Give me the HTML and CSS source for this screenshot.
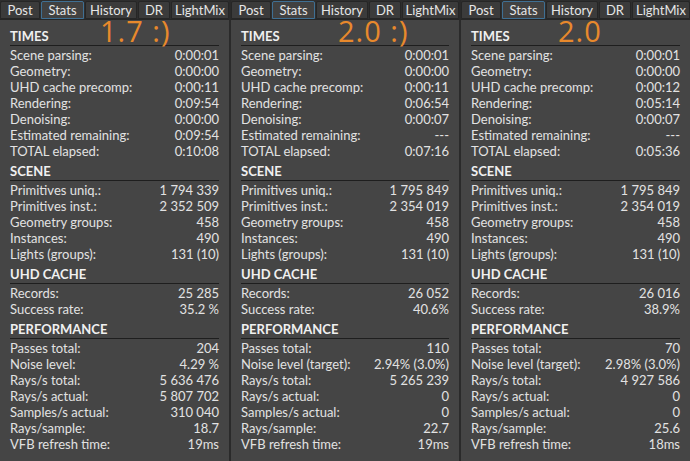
FILE: index.html
```html
<!DOCTYPE html>
<html>
<head>
<meta charset="utf-8">
<link rel="stylesheet" href="styles.css">
</head>
<body>
<div class="app">
  <section class="panel p1">
    <div class="tabs">
      <span class="tab w-post">Post</span>
      <span class="tab w-stats active">Stats</span>
      <span class="tab w-hist">History</span>
      <span class="tab w-dr">DR</span>
      <span class="tab w-lm">LightMix</span>
    </div>
    <div class="body">
      <div class="version v1">1.7 :)</div>
      <div class="hd first">TIMES</div>
      <div class="row"><span>Scene parsing:</span><span>0:00:01</span></div>
      <div class="row"><span>Geometry:</span><span>0:00:00</span></div>
      <div class="row"><span>UHD cache precomp:</span><span>0:00:11</span></div>
      <div class="row"><span>Rendering:</span><span>0:09:54</span></div>
      <div class="row"><span>Denoising:</span><span>0:00:00</span></div>
      <div class="row"><span>Estimated remaining:</span><span>0:09:54</span></div>
      <div class="row"><span>TOTAL elapsed:</span><span>0:10:08</span></div>
      <div class="hd">SCENE</div>
      <div class="row"><span>Primitives uniq.:</span><span>1 794 339</span></div>
      <div class="row"><span>Primitives inst.:</span><span>2 352 509</span></div>
      <div class="row"><span>Geometry groups:</span><span>458</span></div>
      <div class="row"><span>Instances:</span><span>490</span></div>
      <div class="row"><span>Lights (groups):</span><span>131 (10)</span></div>
      <div class="hd">UHD CACHE</div>
      <div class="row"><span>Records:</span><span>25 285</span></div>
      <div class="row"><span>Success rate:</span><span>35.2 %</span></div>
      <div class="hd">PERFORMANCE</div>
      <div class="row"><span>Passes total:</span><span>204</span></div>
      <div class="row"><span>Noise level:</span><span>4.29 %</span></div>
      <div class="row"><span>Rays/s total:</span><span>5 636 476</span></div>
      <div class="row"><span>Rays/s actual:</span><span>5 807 702</span></div>
      <div class="row"><span>Samples/s actual:</span><span>310 040</span></div>
      <div class="row"><span>Rays/sample:</span><span>18.7</span></div>
      <div class="row"><span>VFB refresh time:</span><span>19ms</span></div>
    </div>
  </section>
  <section class="panel p2">
    <div class="tabs">
      <span class="tab w-post">Post</span>
      <span class="tab w-stats active">Stats</span>
      <span class="tab w-hist">History</span>
      <span class="tab w-dr">DR</span>
      <span class="tab w-lm">LightMix</span>
    </div>
    <div class="body">
      <div class="version v2">2.0 :)</div>
      <div class="hd first">TIMES</div>
      <div class="row"><span>Scene parsing:</span><span>0:00:01</span></div>
      <div class="row"><span>Geometry:</span><span>0:00:00</span></div>
      <div class="row"><span>UHD cache precomp:</span><span>0:00:11</span></div>
      <div class="row"><span>Rendering:</span><span>0:06:54</span></div>
      <div class="row"><span>Denoising:</span><span>0:00:07</span></div>
      <div class="row"><span>Estimated remaining:</span><span>---</span></div>
      <div class="row"><span>TOTAL elapsed:</span><span>0:07:16</span></div>
      <div class="hd">SCENE</div>
      <div class="row"><span>Primitives uniq.:</span><span>1 795 849</span></div>
      <div class="row"><span>Primitives inst.:</span><span>2 354 019</span></div>
      <div class="row"><span>Geometry groups:</span><span>458</span></div>
      <div class="row"><span>Instances:</span><span>490</span></div>
      <div class="row"><span>Lights (groups):</span><span>131 (10)</span></div>
      <div class="hd">UHD CACHE</div>
      <div class="row"><span>Records:</span><span>26 052</span></div>
      <div class="row"><span>Success rate:</span><span>40.6%</span></div>
      <div class="hd">PERFORMANCE</div>
      <div class="row"><span>Passes total:</span><span>110</span></div>
      <div class="row"><span>Noise level (target):</span><span>2.94% (3.0%)</span></div>
      <div class="row"><span>Rays/s total:</span><span>5 265 239</span></div>
      <div class="row"><span>Rays/s actual:</span><span>0</span></div>
      <div class="row"><span>Samples/s actual:</span><span>0</span></div>
      <div class="row"><span>Rays/sample:</span><span>22.7</span></div>
      <div class="row"><span>VFB refresh time:</span><span>19ms</span></div>
    </div>
  </section>
  <section class="panel p3">
    <div class="tabs">
      <span class="tab w-post">Post</span>
      <span class="tab w-stats active">Stats</span>
      <span class="tab w-hist">History</span>
      <span class="tab w-dr">DR</span>
      <span class="tab w-lm">LightMix</span>
    </div>
    <div class="body">
      <div class="version v3">2.0</div>
      <div class="hd first">TIMES</div>
      <div class="row"><span>Scene parsing:</span><span>0:00:01</span></div>
      <div class="row"><span>Geometry:</span><span>0:00:00</span></div>
      <div class="row"><span>UHD cache precomp:</span><span>0:00:12</span></div>
      <div class="row"><span>Rendering:</span><span>0:05:14</span></div>
      <div class="row"><span>Denoising:</span><span>0:00:07</span></div>
      <div class="row"><span>Estimated remaining:</span><span>---</span></div>
      <div class="row"><span>TOTAL elapsed:</span><span>0:05:36</span></div>
      <div class="hd">SCENE</div>
      <div class="row"><span>Primitives uniq.:</span><span>1 795 849</span></div>
      <div class="row"><span>Primitives inst.:</span><span>2 354 019</span></div>
      <div class="row"><span>Geometry groups:</span><span>458</span></div>
      <div class="row"><span>Instances:</span><span>490</span></div>
      <div class="row"><span>Lights (groups):</span><span>131 (10)</span></div>
      <div class="hd">UHD CACHE</div>
      <div class="row"><span>Records:</span><span>26 016</span></div>
      <div class="row"><span>Success rate:</span><span>38.9%</span></div>
      <div class="hd">PERFORMANCE</div>
      <div class="row"><span>Passes total:</span><span>70</span></div>
      <div class="row"><span>Noise level (target):</span><span>2.98% (3.0%)</span></div>
      <div class="row"><span>Rays/s total:</span><span>4 927 586</span></div>
      <div class="row"><span>Rays/s actual:</span><span>0</span></div>
      <div class="row"><span>Samples/s actual:</span><span>0</span></div>
      <div class="row"><span>Rays/sample:</span><span>25.6</span></div>
      <div class="row"><span>VFB refresh time:</span><span>18ms</span></div>
    </div>
  </section>
</div>
</body>
</html>
```

FILE: styles.css
```css
* { box-sizing: border-box; }
html, body { margin: 0; padding: 0; }
body {
  width: 690px;
  height: 461px;
  overflow: hidden;
  background: #2a2a2a;
  font-family: "Lato", "Noto Sans", sans-serif;
  font-size: 13px;
  color: #e2e2e2;
}
.app {
  display: flex;
  gap: 2px;
  height: 461px;
}
.panel {
  position: relative;
  background: #454545;
  height: 461px;
  display: flex;
  flex-direction: column;
}
.p1 { width: 229px; }
.p2 { width: 228px; }
.p3 { width: 229px; }
.tabs {
  display: flex;
  height: 20px;
  background: #2e2e2e;
  border-bottom: 1px solid #262626;
  padding-top: 1px;
}
.tab {
  display: flex;
  align-items: center;
  justify-content: center;
  height: 18px;
  background: #3b3b3b;
  border: 1px solid #262626;
  border-radius: 2px 2px 0 0;
  margin-right: 1px;
  font-size: 13px;
  color: #e6e6e6;
}
.tab.active {
  border-color: #3f6f93;
  background: #414141;
}
.w-post { width: 40px; }
.w-stats { width: 43px; }
.w-hist { width: 52px; }
.w-dr { width: 32px; }
.w-lm { flex: 1; margin-right: 0; }
.body {
  position: relative;
  padding: 0 10px;
}
.version {
  position: absolute;
  top: 0;
  font-family: "Open Sans", sans-serif;
  font-weight: 400;
  font-size: 29px;
  line-height: 22px;
  letter-spacing: 1px;
  color: #e8892c;
}
.v1 { left: 100px; }
.v2 { left: 107px; }
.v3 { left: 97px; }
.hd {
  margin-top: 4px;
  line-height: 17px;
  font-weight: bold;
  font-size: 13px;
  color: #f0f0f0;
  border-bottom: 1px solid #1e1e1e;
  margin-bottom: 1px;
}
.hd.first { margin-top: 8px; }
.row {
  display: flex;
  justify-content: space-between;
  height: 16px;
  line-height: 16px;
  white-space: nowrap;
}
```
